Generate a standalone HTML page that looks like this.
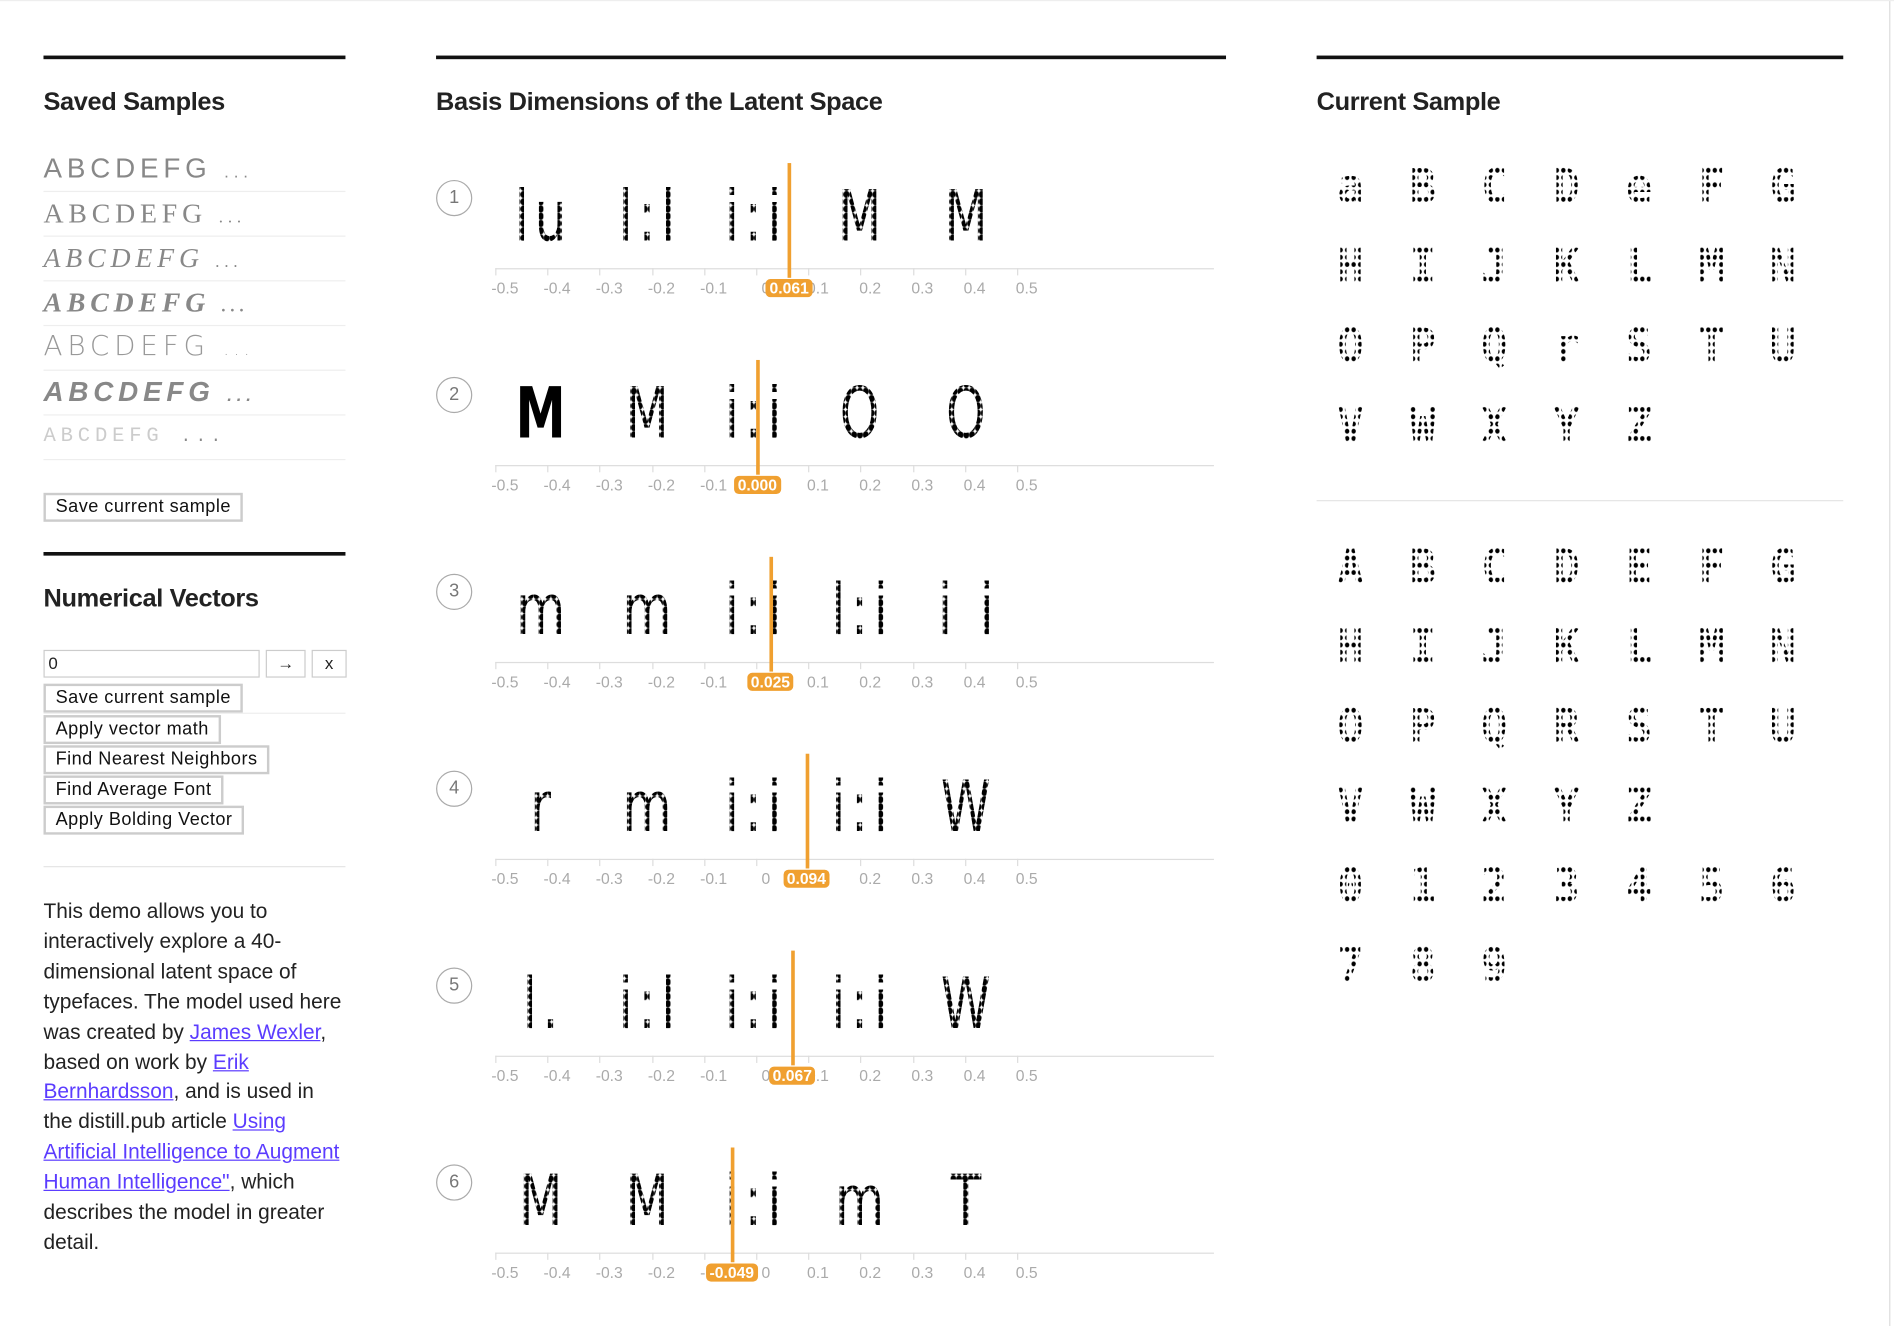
<!DOCTYPE html>
<html><head><meta charset="utf-8"><style>
html,body{margin:0;padding:0;background:#fff;overflow:hidden;width:1894px;height:1326px}
#w{position:absolute;left:0;top:0;width:1568px;height:1098px;transform:scale(1.2079);transform-origin:0 0;font-family:"Liberation Sans",sans-serif;color:#222}
.a{position:absolute}
.rule{position:absolute;height:3px;background:#111}
h2{position:absolute;margin:0;font-size:21px;font-weight:bold;color:#222;letter-spacing:-.3px}
.row{position:absolute;left:36px;width:250px;height:37px;border-bottom:1px solid #eee;font-size:23px;color:#888;letter-spacing:4px;line-height:37px}
.btn{position:absolute;left:36px;border:2px solid #ccc;background:#fff;font-size:15px;letter-spacing:.4px;padding:0 8px;height:20px;line-height:20px;color:#111}
.p{position:absolute;left:36px;top:742px;width:252px;font-size:17.3px;line-height:24.9px;color:#222}
.p a{color:#5b3cff;text-decoration:underline}
.circ{position:absolute;width:28px;height:28px;border:1.5px solid #aaa;border-radius:50%;text-align:center;line-height:28px;font-size:15px;color:#777}
.axis{position:absolute;left:410px;width:595px;height:1px;background:#ddd}
.tk{position:absolute;font-size:13px;color:#aaa;transform:translateX(-50%)}
.gl{position:absolute;font-size:58px;color:#000;font-family:"DejaVu Sans Condensed","Liberation Sans",sans-serif;transform:translateX(-50%) scaleX(.8);line-height:54px;letter-spacing:6px;
-webkit-mask-image:radial-gradient(circle,#000 2.6px,transparent 3.4px);-webkit-mask-size:6px 6px}
.ol{position:absolute;width:3px;background:#f0a030}
.badge{position:absolute;background:#f0a030;color:#fff;font-weight:bold;font-size:13px;border-radius:4px;padding:0 3px;transform:translateX(-50%);line-height:15px}
.cs{position:absolute;font-family:"DejaVu Sans Mono","Liberation Mono",monospace;font-size:40px;font-weight:bold;color:#000;transform:translate(-50%,-50%) scaleX(.9);
-webkit-mask-image:radial-gradient(circle,#000 1.7px,transparent 2.3px);-webkit-mask-size:6px 6px}
</style></head><body><div id="w">
<div class="a" style="left:1564px;top:0;width:1px;height:1098px;background:#ddd"></div>
<div class="a" style="left:0;top:0;width:1568px;height:1px;background:#eee"></div>

<div class="rule" style="left:36px;top:46px;width:250px"></div>
<h2 style="left:36px;top:73px">Saved Samples</h2>
<div class="row" style="top:121px;font-family:'Liberation Sans'">ABCDEFG <span style="font-size:14px">...</span></div>
<div class="row" style="top:158px;font-family:'Liberation Serif'">ABCDEFG <span style="font-size:14px">...</span></div>
<div class="row" style="top:195px;font-family:'Liberation Serif';font-style:italic">ABCDEFG <span style="font-size:14px">...</span></div>
<div class="row" style="top:232px;font-family:'Liberation Serif';font-weight:bold;font-style:italic">ABCDEFG <span style="font-size:14px">...</span></div>
<div class="row" style="top:269px;font-family:'DejaVu Sans';font-weight:200;color:#999">ABCDEFG <span style="font-size:14px">...</span></div>
<div class="row" style="top:306px;font-weight:bold;font-style:italic">ABCDEFG <span style="font-size:14px">...</span></div>
<div class="row" style="top:343px;color:#ccc;font-size:17px;font-family:'Liberation Mono'">ABCDEFG <span style="font-size:14px;color:#888">...</span></div>
<div class="btn" style="top:408px">Save current sample</div>

<div class="rule" style="left:36px;top:457px;width:250px"></div>
<h2 style="left:36px;top:484px">Numerical Vectors</h2>
<div class="a" style="left:36px;top:538px;width:174px;height:21px;border:1px solid #ccc;font-size:14px;line-height:21px;padding-left:3px">0</div>
<div class="a" style="left:220px;top:538px;width:31px;height:21px;border:1px solid #ccc;font-size:14px;text-align:center;line-height:21px">→</div>
<div class="a" style="left:258px;top:538px;width:27px;height:21px;border:1px solid #ccc;font-size:14px;text-align:center;line-height:21px">x</div>
<div class="btn" style="top:566px">Save current sample</div>
<div class="a" style="left:36px;top:590px;width:250px;height:1px;background:#eee"></div>
<div class="btn" style="top:592px">Apply vector math</div>
<div class="btn" style="top:617px">Find Nearest Neighbors</div>
<div class="btn" style="top:642px">Find Average Font</div>
<div class="btn" style="top:667px">Apply Bolding Vector</div>
<div class="a" style="left:36px;top:717px;width:250px;height:1px;background:#e5e5e5"></div>
<div class="p">This demo allows you to interactively explore a 40-dimensional latent space of typefaces. The model used here was created by <a>James Wexler</a>, based on work by <a>Erik Bernhardsson</a>, and is used in the distill.pub article <a>Using Artificial Intelligence to Augment Human Intelligence"</a>, which describes the model in greater detail.</div>

<div class="rule" style="left:361px;top:46px;width:654px"></div>
<h2 style="left:361px;top:73px">Basis Dimensions of the Latent Space</h2>

<div id="charts"></div>

<div class="rule" style="left:1090px;top:46px;width:436px"></div>
<h2 style="left:1090px;top:73px">Current Sample</h2>
<div class="a" style="left:1090px;top:414px;width:436px;height:1px;background:#e5e5e5"></div>
<div id="cs"></div>
<script>
var ch=document.getElementById('charts'),h='';
var vals=[0.061,0.000,0.025,0.094,0.067,-0.049];
var gl=[["lu","l:l","i:i","M","M"],["M","M","i:i","O","O"],["m","m","i:i","l:i","i i"],["r","m","i:i","i:i","W"],["l.","i:l","i:i","i:i","W"],["M","M","i:i","m","T"]];
for(var r=0;r<6;r++){var y=163*r;
h+='<div class="circ" style="left:361px;top:'+(149+y)+'px">'+(r+1)+'</div>';
for(var g=0;g<5;g++){
h+='<div class="gl" style="left:'+(450+g*88)+'px;top:'+(152+y)+'px;'+(r==1&&g==0?'font-weight:bold;-webkit-mask-image:none':'')+'">'+gl[r][g]+'</div>';}
h+='<div class="axis" style="top:'+(222+y)+'px"></div>';
for(var t=0;t<11;t++){var x=410+t*43.2;var lab='0';
if(t>5)lab=((t-5)/10).toFixed(1);if(t<5)lab='-'+((5-t)/10).toFixed(1);
h+='<div class="a" style="left:'+x+'px;top:'+(222+y)+'px;width:1px;height:6px;background:#ddd"></div>';
h+='<div class="tk" style="left:'+(x+8)+'px;top:'+(231+y)+'px">'+lab+'</div>';}
var vx=627+vals[r]*432;
h+='<div class="ol" style="left:'+(vx-1)+'px;top:'+(135+y)+'px;height:95px"></div>';
h+='<div class="badge" style="left:'+vx+'px;top:'+(231+y)+'px">'+vals[r].toFixed(3)+'</div>';}
ch.innerHTML=h;
var cs='';
function grid(str,top){for(var i=0;i<str.length;i++){var c=i%7,rr=Math.floor(i/7);
cs+='<div class="cs" style="left:'+(1118+c*59.7)+'px;top:'+(top+rr*66)+'px">'+str[i]+'</div>';}}
grid("aBCDeFGHIJKLMNOPQrSTUVWXYZ",155);
grid("ABCDEFGHIJKLMNOPQRSTUVWXYZ",470);grid("0123456789",470+4*66);
document.getElementById('cs').innerHTML=cs;
</script>
</div></body></html>
